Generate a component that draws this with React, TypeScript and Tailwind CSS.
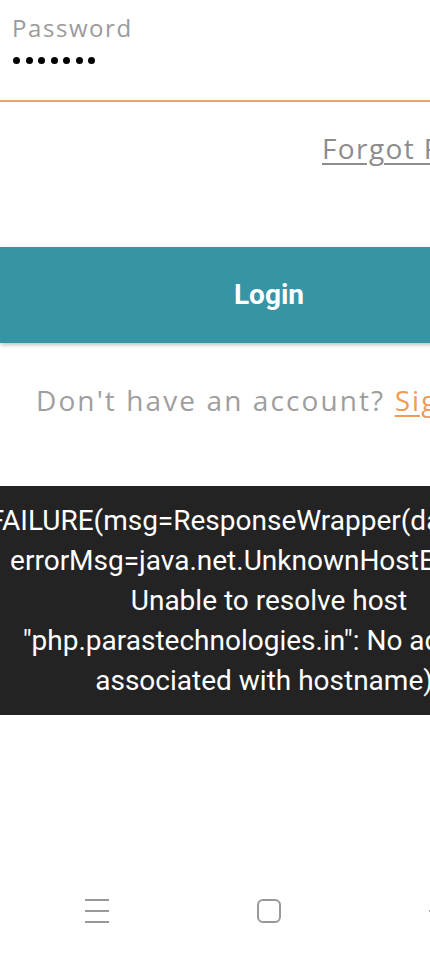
import React from 'react';

const sans = { fontFamily: '"Open Sans", "Noto Sans", sans-serif' };
const roboto = { fontFamily: 'Roboto, "Liberation Sans", sans-serif' };

const App: React.FC = () => {
  return (
    <div className="w-[430px] h-[956px] overflow-hidden bg-white">
      <div className="w-[538px] h-full flex flex-col" style={sans}>
        {/* password field */}
        <div className="pt-[12px] px-[12px]">
          <div className="text-[24px] leading-[32px] text-[#9b9b9b] tracking-[0.065em]">Password</div>
          <div className="flex gap-[5.5px] mt-[13px] ml-[1px]">
            {Array.from({ length: 7 }).map((_, i) => (
              <span key={i} className="w-[7px] h-[7px] rounded-full bg-black" />
            ))}
          </div>
        </div>
        <div className="mt-[36px] h-[2px] bg-[#e6a867]" />

        {/* forgot */}
        <div className="mt-[28px] pl-[322px]">
          <span className="text-[28px] leading-[36px] tracking-[0.05em] text-[#8c8c8c] underline underline-offset-[4px] decoration-[1.5px] whitespace-nowrap">
            Forgot Password?
          </span>
        </div>

        {/* login button */}
        <button
          className="mt-[81px] h-[96px] w-full shrink-0 bg-[#3794a4] text-white text-[28px] font-bold shadow-[0_2px_4px_rgba(0,0,0,0.25)]"
          style={roboto}
        >
          Login
        </button>

        {/* sign up */}
        <div className="mt-[37px] pl-[36px] whitespace-nowrap text-[28px] leading-[40px] tracking-[0.075em] text-[#9e9e9e]">
          Don't have an account? <span className="text-[#f39a55] underline underline-offset-[4px] decoration-[1.5px]">Sign Up</span>
        </div>

        {/* toast */}
        <div
          className="mt-[66px] h-[229px] shrink-0 bg-[#232323] text-white text-[28px] leading-[40px] flex flex-col items-center justify-center"
          style={roboto}
        >
          <div className="whitespace-nowrap mr-[18px]">FAILURE(msg=ResponseWrapper(data=null,</div>
          <div className="whitespace-nowrap ml-[20px]">errorMsg=java.net.UnknownHostException:</div>
          <div className="whitespace-nowrap">Unable to resolve host</div>
          <div className="whitespace-nowrap mr-[6px]">"php.parastechnologies.in": No address</div>
          <div className="whitespace-nowrap">associated with hostname))</div>
        </div>

        <div className="flex-1" />

        {/* nav bar */}
        <div className="h-[80px] mb-[5px] flex items-center justify-center gap-[148px] text-[#999999]">
          <svg width="24" height="24" viewBox="0 0 24 24" fill="none" stroke="currentColor" strokeWidth="2">
            <path d="M0 1h24M0 12h24M0 23h24" />
          </svg>
          <svg width="24" height="24" viewBox="0 0 24 24" fill="none" stroke="currentColor" strokeWidth="2">
            <rect x="1" y="1" width="22" height="22" rx="5" />
          </svg>
          <svg width="24" height="24" viewBox="0 0 24 24" fill="none" stroke="currentColor" strokeWidth="2">
            <path d="M13 1L1 12l12 11" />
          </svg>
        </div>
      </div>
    </div>
  );
};

export default App;
